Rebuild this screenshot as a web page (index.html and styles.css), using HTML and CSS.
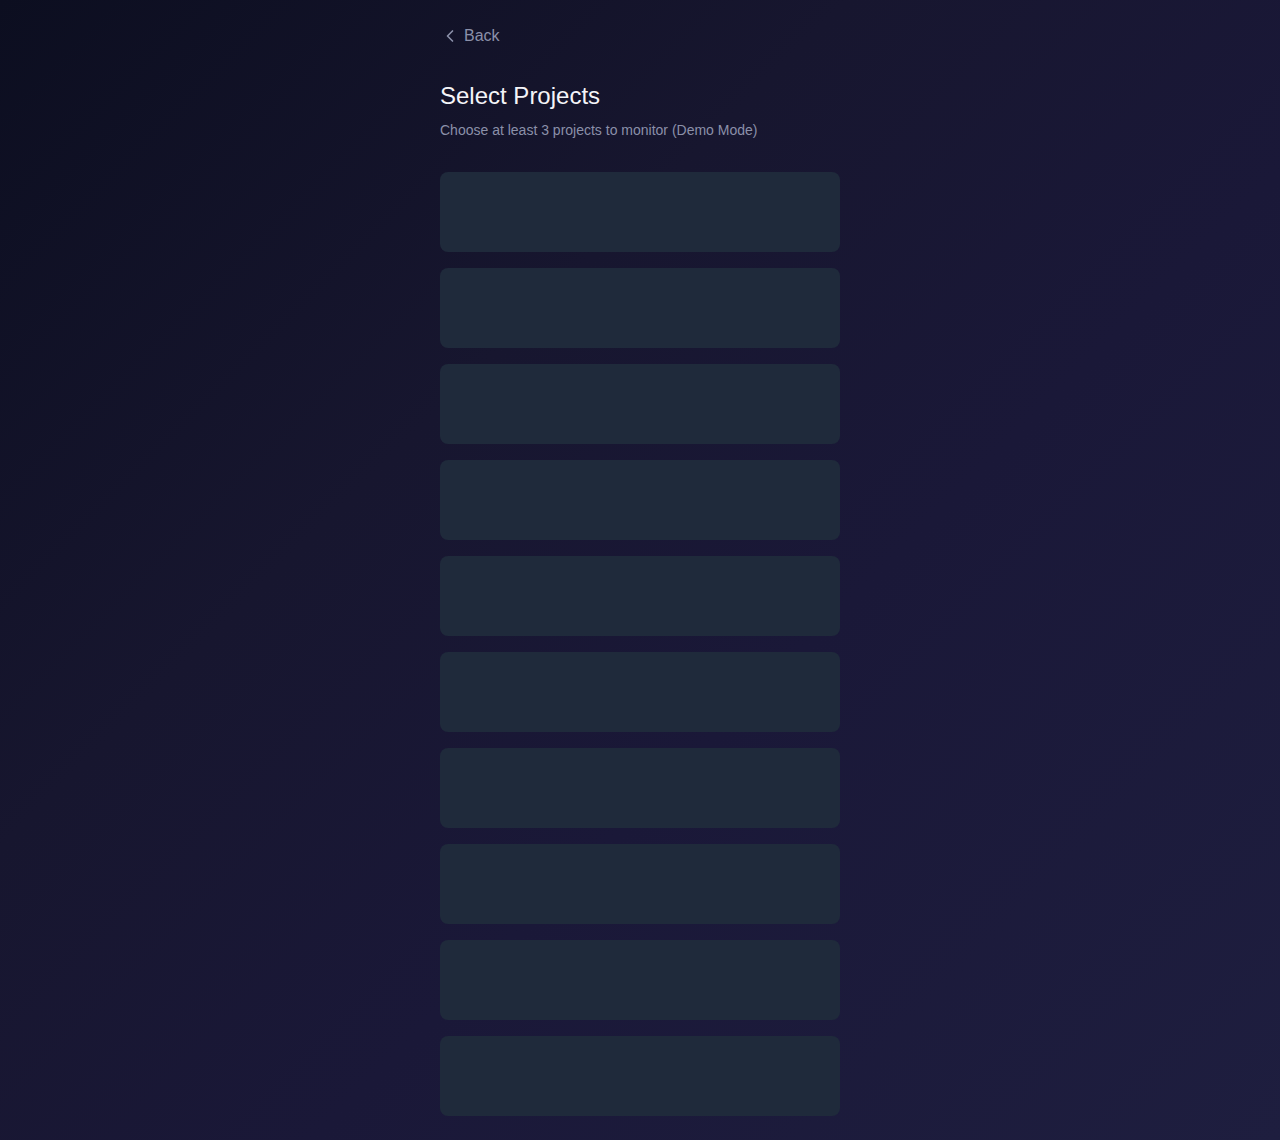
FILE: index.html
```html
<!DOCTYPE html>
<html lang="en">
<head>
<meta charset="utf-8">
<title>Select Projects</title>
<link rel="stylesheet" href="styles.css">
</head>
<body>
<div class="page">
  <main class="container">
    <button class="back" type="button">
      <svg class="back-icon" width="20" height="20" viewBox="0 0 24 24" fill="none" stroke="currentColor" stroke-width="2" stroke-linecap="round" stroke-linejoin="round"><path d="M15 18l-6-6 6-6"/></svg>
      <span>Back</span>
    </button>
    <h1 class="title">Select Projects</h1>
    <p class="subtitle">Choose at least 3 projects to monitor (Demo Mode)</p>
    <div class="list">
      <div class="skeleton"></div>
      <div class="skeleton"></div>
      <div class="skeleton"></div>
      <div class="skeleton"></div>
      <div class="skeleton"></div>
      <div class="skeleton"></div>
      <div class="skeleton"></div>
      <div class="skeleton"></div>
      <div class="skeleton"></div>
      <div class="skeleton"></div>
    </div>
  </main>
</div>
</body>
</html>
```

FILE: styles.css
```css
* { box-sizing: border-box; }
html, body { margin: 0; padding: 0; }
body {
  font-family: "Liberation Sans", Arial, sans-serif;
  background: #0f0f23;
}
.page {
  min-height: 100vh;
  background: linear-gradient(135deg, #0c0e20 0%, #17162f 35%, #1a1838 60%, #1e1e3f 100%);
  padding: 24px 0 24px;
}
.container {
  width: 400px;
  margin: 0 auto;
}
.back {
  display: flex;
  align-items: center;
  gap: 4px;
  height: 24px;
  background: none;
  border: 0;
  padding: 0;
  color: #8b90a9;
  font-family: inherit;
  font-size: 16px;
  line-height: 24px;
  cursor: pointer;
}
.back-icon { display: block; }
.title {
  margin: 32px 0 0;
  font-size: 24px;
  line-height: 32px;
  font-weight: 400;
  color: #f4f4f8;
}
.subtitle {
  margin: 8px 0 0;
  font-size: 14px;
  line-height: 20px;
  color: #8b90a9;
}
.list {
  margin-top: 32px;
  display: flex;
  flex-direction: column;
  gap: 16px;
}
.skeleton {
  height: 80px;
  border-radius: 8px;
  background: #1f2a3b;
}
```
